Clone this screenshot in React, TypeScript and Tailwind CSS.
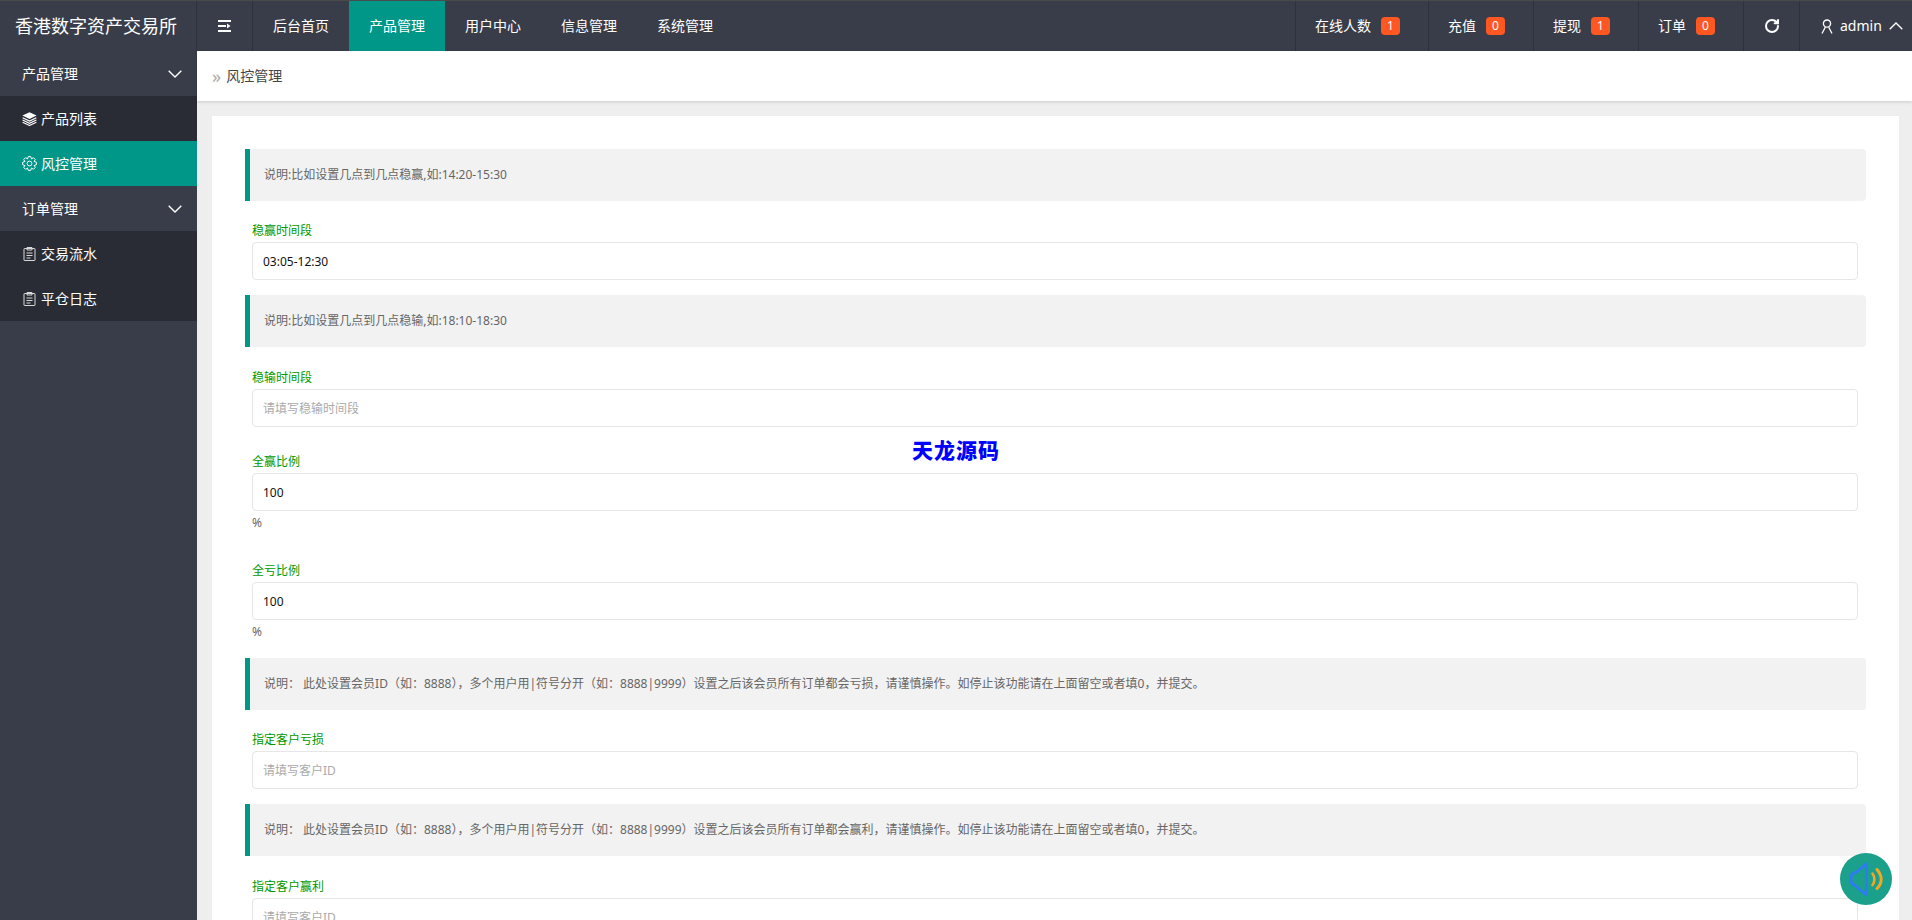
import { RotateCw } from 'lucide-react';

const font = { fontFamily: '"Noto Sans", "Noto Sans CJK SC", sans-serif' };

// outline of an eight-tooth cog for the side menu
const cogPath =
  Array.from({ length: 8 }, (_, i) =>
    [
      [-24, 5],
      [-10, 7],
      [10, 7],
      [24, 5],
    ]
      .map(([offset, radius]) => {
        const a = ((i * 45 + offset) * Math.PI) / 180;
        return `${(7.5 + radius * Math.cos(a)).toFixed(2)} ${(7.5 + radius * Math.sin(a)).toFixed(2)}`;
      })
      .join(' L'),
  )
    .map((part, i) => (i === 0 ? 'M' : 'L') + part)
    .join(' ') + ' Z';

function LayersIcon() {
  return (
    <svg width="15" height="14" viewBox="0 0 15 14" fill="none" className="shrink-0">
      <path d="M7.5.3 14.6 3.6 7.5 7 .4 3.6Z" fill="currentColor" />
      <path d="M.6 5.8 7.5 9.1 14.4 5.8M.6 8 7.5 11.3 14.4 8M.6 10.2 7.5 13.5 14.4 10.2" stroke="currentColor" strokeWidth="1.1" />
    </svg>
  );
}

function CogIcon() {
  return (
    <svg width="15" height="15" viewBox="0 0 15 15" fill="none" stroke="currentColor" strokeWidth="1" strokeLinejoin="round" className="shrink-0">
      <path d={cogPath} />
      <circle cx="7.5" cy="7.5" r="2.4" />
    </svg>
  );
}

function ClipboardIcon() {
  return (
    <svg width="15" height="14" viewBox="0 0 15 14" fill="none" stroke="#d8d8d8" strokeWidth="1" className="shrink-0">
      <rect x="2" y="1.5" width="11" height="12" rx=".5" />
      <path d="M5 .5h5v2.5H5zM4.5 6h6M4.5 8.5h6M4.5 11h4" />
    </svg>
  );
}

function ShrinkIcon() {
  return (
    <svg width="13" height="12" viewBox="0 0 13 12" fill="currentColor">
      <rect x="0" y="0" width="13" height="2" />
      <rect x="0" y="5" width="8" height="2" />
      <rect x="0" y="10" width="13" height="2" />
      <path d="M9 3.5 12.5 6 9 8.5z" />
    </svg>
  );
}

function UserIcon() {
  return (
    <svg width="12" height="15" viewBox="0 0 12 15" fill="none" stroke="currentColor" strokeWidth="1.3" className="shrink-0">
      <circle cx="6" cy="4.6" r="3.6" />
      <path d="M4.4 8 1 14.5M7.6 8 11 14.5" />
    </svg>
  );
}

function Chevron({ up }: { up?: boolean }) {
  return (
    <svg width="14" height="8" viewBox="0 0 14 8" fill="none" stroke="currentColor" strokeWidth="1.4" className="shrink-0">
      <path d={up ? 'M.7 7.3 7 1l6.3 6.3' : 'M.7.7 7 7 13.3.7'} />
    </svg>
  );
}

function SpeakerIcon() {
  return (
    <svg width="52" height="52" viewBox="0 0 52 52" fill="none" strokeLinecap="round" strokeLinejoin="round">
      <path d="M26.5 11C22 14 19 17 16 19.5 13 20 11 21 11 24v4c0 3 3 4 5 5 3 3 6 6 10.5 8.5Z" stroke="#2f7cf0" strokeWidth="2.8" />
      <path d="M32.5 20.5c2.5 3.5 2.5 8.5 0 11.5" stroke="#f5a623" strokeWidth="2.6" />
      <path d="M37 16.5c5.5 6.5 5.5 13.5 0 19" stroke="#f5a623" strokeWidth="3" />
    </svg>
  );
}

function SideGroup({ label }: { label: string }) {
  return (
    <div className="flex h-[45px] items-center justify-between pl-[22px] pr-[15px] text-sm text-white">
      <span>{label}</span>
      <Chevron />
    </div>
  );
}

function SideItem({ label, icon, active }: { label: string; icon: React.ReactNode; active?: boolean }) {
  return (
    <div className={`flex h-[45px] items-center gap-1 pl-[22px] text-sm text-white ${active ? 'bg-[#009688]' : 'bg-[#2a2c35]'}`}>
      {icon}
      <span>{label}</span>
    </div>
  );
}

function Tip({ children, className = '' }: { children: React.ReactNode; className?: string }) {
  return (
    <div className={`flex h-[52px] items-center rounded-r-sm border-l-[5px] border-[#009688] bg-[#f2f2f2] pl-[14px] text-xs text-[#666] ${className}`}>
      {children}
    </div>
  );
}

function Field({ label, value, placeholder, suffix, className = '' }: { label: string; value?: string; placeholder?: string; suffix?: string; className?: string }) {
  return (
    <div className={`ml-[7px] mr-2 ${className}`}>
      <div className="mb-px h-5 text-xs leading-5 text-[#009900]">{label}</div>
      <input
        readOnly
        value={value ?? ''}
        placeholder={placeholder}
        className="block h-[38px] w-full rounded-sm border border-[#e6e6e6] bg-white pl-2.5 text-xs text-[#111] outline-none placeholder:text-[#aaa]"
      />
      {suffix && <div className="mt-0.5 h-5 text-xs leading-5 text-[#666]">{suffix}</div>}
    </div>
  );
}

function NavItem({ label, active }: { label: string; active?: boolean }) {
  return (
    <div className={`flex h-full w-24 items-center justify-center text-sm text-white ${active ? 'bg-[#009688]' : ''}`}>{label}</div>
  );
}

function Stat({ label, count }: { label: string; count: number }) {
  return (
    <div className="flex h-full items-center gap-2.5 border-l border-[#2f323c] pl-[19px] pr-7 text-sm text-white">
      <span>{label}</span>
      <span className="flex h-[18px] w-[19px] items-center justify-center rounded-sm bg-[#ff5722] text-xs">{count}</span>
    </div>
  );
}

export default function App() {
  return (
    <div style={font} className="relative flex h-[920px] w-full flex-col overflow-hidden bg-[#eee]">
      <header className="flex h-[51px] shrink-0 items-stretch border-t border-[#4a4a4a] bg-[#393d49] text-white">
        <div className="flex w-[197px] shrink-0 items-center whitespace-nowrap border-r border-[#2f323c] pl-[15px] text-[18px]">香港数字资产交易所</div>
        <div className="flex w-[56px] shrink-0 items-center justify-center border-r border-[#2f323c]">
          <ShrinkIcon />
        </div>
        <NavItem label="后台首页" />
        <NavItem label="产品管理" active />
        <NavItem label="用户中心" />
        <NavItem label="信息管理" />
        <NavItem label="系统管理" />
        <div className="ml-auto flex h-full items-stretch">
          <Stat label="在线人数" count={1} />
          <Stat label="充值" count={0} />
          <Stat label="提现" count={1} />
          <Stat label="订单" count={0} />
          <div className="flex w-14 items-center justify-center border-l border-[#2f323c]">
            <RotateCw size={16} strokeWidth={3} />
          </div>
          <div className="flex w-[113px] items-center gap-[7px] border-l border-[#2f323c] pl-[21px] text-sm">
            <UserIcon />
            <span>admin</span>
            <Chevron up />
          </div>
        </div>
      </header>
      <div className="flex min-h-0 flex-1">
        <aside className="w-[197px] shrink-0 bg-[#393d49]">
          <SideGroup label="产品管理" />
          <SideItem label="产品列表" icon={<LayersIcon />} />
          <SideItem label="风控管理" icon={<CogIcon />} active />
          <SideGroup label="订单管理" />
          <SideItem label="交易流水" icon={<ClipboardIcon />} />
          <SideItem label="平仓日志" icon={<ClipboardIcon />} />
        </aside>
        <main className="min-w-0 flex-1">
          <div className="flex h-[50px] items-center bg-white pl-[15px] text-sm text-[#444] shadow-[0_1px_3px_rgba(0,0,0,0.15)]">
            <span className="mr-[5px] text-[18px] leading-none text-[#aaa]">»</span>
            风控管理
          </div>
          <div className="ml-[15px] mr-[13px] mt-[15px] bg-white px-[33px] pt-[33px] pb-10">
            <Tip>说明:比如设置几点到几点稳赢,如:14:20-15:30</Tip>
            <Field label="稳赢时间段" value="03:05-12:30" className="mt-5" />
            <Tip className="mt-[15px]">说明:比如设置几点到几点稳输,如:18:10-18:30</Tip>
            <Field label="稳输时间段" placeholder="请填写稳输时间段" className="mt-[21px]" />
            <Field label="全赢比例" value="100" suffix="%" className="mt-[25px]" />
            <Field label="全亏比例" value="100" suffix="%" className="mt-[28px]" />
            <Tip className="mt-4">说明： 此处设置会员ID（如：8888），多个用户用|符号分开（如：8888|9999）设置之后该会员所有订单都会亏损，请谨慎操作。如停止该功能请在上面留空或者填0，并提交。</Tip>
            <Field label="指定客户亏损" placeholder="请填写客户ID" className="mt-5" />
            <Tip className="mt-[15px]">说明： 此处设置会员ID（如：8888），多个用户用|符号分开（如：8888|9999）设置之后该会员所有订单都会赢利，请谨慎操作。如停止该功能请在上面留空或者填0，并提交。</Tip>
            <Field label="指定客户赢利" placeholder="请填写客户ID" className="mt-[21px]" />
          </div>
        </main>
      </div>
      {/* watermark over the form */}
      <div className="absolute left-[912px] top-[437px] text-[21px] font-black leading-[26px] tracking-[1px] text-[#0000ff]">天龙源码</div>
      <div className="absolute bottom-[15px] right-5 h-[52px] w-[52px] rounded-full bg-[#1ba08c]">
        <SpeakerIcon />
      </div>
    </div>
  );
}
